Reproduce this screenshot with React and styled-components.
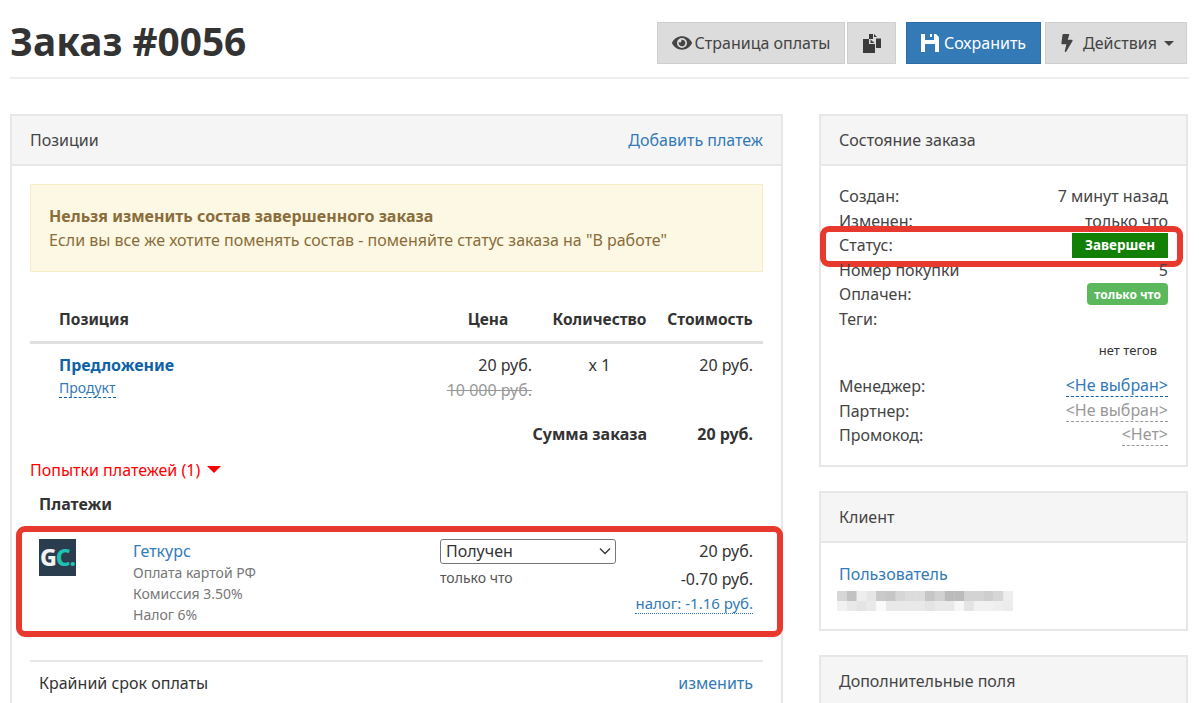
import styled, { createGlobalStyle } from "styled-components";
import { FaEye, FaBolt } from "react-icons/fa";

const GlobalStyle = createGlobalStyle`
  html, body {
    margin: 0;
    padding: 0;
    background: #fff;
  }
  body {
    font-family: "Noto Sans", "Open Sans", sans-serif;
    font-size: 16px;
    color: #333;
  }
  * {
    box-sizing: border-box;
  }
`;

const Page = styled.div`
  width: 1199px;
  height: 703px;
  overflow: hidden;
  padding: 0 10px;
`;

const Header = styled.header`
  height: 79px;
  display: flex;
  justify-content: space-between;
  align-items: flex-start;
  border-bottom: 2px solid #eeeeee;
  margin-bottom: 35px;
`;

const Title = styled.h1`
  margin: 18px 0 0;
  font-size: 38.8px;
  line-height: 46px;
  font-weight: 700;
  color: #333;
`;

const Toolbar = styled.div`
  display: flex;
  margin: 22px 2px 0 0;
`;

const Button = styled.button`
  width: ${(p) => p.$width}px;
  height: 42px;
  padding: 0;
  margin-left: ${(p) => p.$gap || 0}px;
  display: flex;
  align-items: center;
  justify-content: center;
  gap: ${(p) => p.$iconGap || 4}px;
  font: inherit;
  font-size: 16px;
  color: ${(p) => (p.$primary ? "#fff" : "#444")};
  background: ${(p) => (p.$primary ? "#337ab7" : "#dcdcdc")};
  border: 1px solid ${(p) => (p.$primary ? "#2e6da4" : "#cfcfcf")};
  white-space: nowrap;
`;

const Caret = styled.span`
  width: 0;
  height: 0;
  border-left: ${(p) => p.$size || 5}px solid transparent;
  border-right: ${(p) => p.$size || 5}px solid transparent;
  border-top: ${(p) => p.$size || 5}px solid ${(p) => p.$color || "#444"};
`;

const Columns = styled.div`
  display: grid;
  grid-template-columns: 773px 369px;
  column-gap: 36px;
  align-items: start;
`;

const Side = styled.div`
  display: flex;
  flex-direction: column;
  gap: 24px;
`;

const Panel = styled.section`
  border: 2px solid #e7e7e7;
  background: #fff;
`;

const PanelHeading = styled.div`
  height: 50px;
  padding: 0 18px;
  display: flex;
  align-items: center;
  justify-content: space-between;
  background: #f5f5f5;
  border-bottom: 2px solid #e7e7e7;
  color: #444;
`;

const PanelBody = styled.div`
  padding: ${(p) => p.$pad || "18px"};
  position: relative;
`;

const Link = styled.a`
  color: #337ab7;
  text-decoration: none;
`;

const Alert = styled.div`
  height: 88px;
  padding: 19px 18px;
  background: #fcf8e3;
  border: 1px solid #f5ecc8;
  color: #8a6d3b;
  line-height: 24px;
`;

const AlertTitle = styled.div`
  font-weight: 700;
`;

const Table = styled.table`
  width: 733px;
  margin-top: 27px;
  border-collapse: collapse;
  table-layout: fixed;
`;

const Th = styled.th`
  height: 43px;
  padding: 0 10px 2px;
  font-weight: 700;
  font-size: 15.5px;
  color: #333;
  text-align: ${(p) => p.$align || "center"};
  padding-left: ${(p) => p.$left || 10}px;
  border-bottom: 3px solid #e0e0e0;
`;

const Td = styled.td`
  padding: 9px 10px 6px;
  vertical-align: top;
  text-align: ${(p) => p.$align || "right"};
  padding-left: ${(p) => p.$left || 10}px;
  line-height: 24px;
`;

const SumCell = styled(Td)`
  font-weight: 700;
  padding-top: 14px;
  padding-bottom: 0;
`;

const ItemName = styled.a`
  display: block;
  color: #0f62a8;
  font-weight: 700;
`;

const ItemType = styled.a`
  display: block;
  width: fit-content;
  color: #337ab7;
  font-size: 14px;
  line-height: 18px;
  margin-top: 2px;
  border-bottom: 1px dashed #0f62a8;
`;

const OldPrice = styled.div`
  margin-top: 1px;
  color: #999;
  text-decoration: line-through;
`;

const Attempts = styled.div`
  margin-top: 12px;
  display: flex;
  align-items: center;
  gap: 7px;
  color: #f00;
  line-height: 24px;
`;

const SectionTitle = styled.div`
  margin: 10px 0 0 9px;
  font-weight: 700;
  line-height: 24px;
`;

const Payment = styled.div`
  position: relative;
  display: grid;
  grid-template-columns: 94px 307px 176px 1fr;
  margin: 23px 10px 0 9px;
  height: 97px;
`;

const Highlight = styled.div`
  position: absolute;
  top: ${(p) => p.$top}px;
  left: ${(p) => p.$left}px;
  right: ${(p) => p.$right}px;
  bottom: ${(p) => p.$bottom}px;
  border: 6px solid #e8392e;
  border-radius: 9px;
  pointer-events: none;
`;

const Logo = styled.div`
  width: 37px;
  height: 37px;
  background: #2a3d4f;
  display: flex;
  align-items: center;
  justify-content: center;
  font-weight: 800;
  font-size: 23px;
  letter-spacing: -1px;
  color: #f2f2f2;
`;

const LogoAccent = styled.span`
  color: #1fc2b0;
`;

const Gateway = styled.div`
  line-height: 21px;
  font-size: 14px;
  color: #777;
`;

const GatewayName = styled(Link)`
  display: block;
  font-size: 16px;
  line-height: 24px;
  margin-bottom: -1px;
`;

const StatusSelect = styled.select`
  appearance: none;
  width: 176px;
  height: 25px;
  padding: 0 0 0 5px;
  font: inherit;
  color: #333;
  background: #fff url("data:image/svg+xml,%3Csvg xmlns='http://www.w3.org/2000/svg' width='12' height='8'%3E%3Cpath d='M1 1.5 6 6.5 11 1.5' fill='none' stroke='%23333' stroke-width='1.3'/%3E%3C/svg%3E") no-repeat right 4px center;
  border: 1px solid #767676;
  border-radius: 3px;
`;

const PaymentTime = styled.div`
  font-size: 14px;
  color: #555;
  margin-top: 4px;
`;

const Amounts = styled.div`
  display: flex;
  flex-direction: column;
  align-items: flex-end;
  line-height: 24px;
`;

const Amount = styled.div`
  margin-top: ${(p) => p.$gap || 0}px;
`;

const TaxLink = styled(Link)`
  border-bottom: 1px dotted #337ab7;
  font-size: 15px;
  line-height: 19px;
  margin-top: 3px;
`;

const Deadline = styled.div`
  margin-top: 24px;
  padding: 9px 10px 0 9px;
  height: 60px;
  display: flex;
  justify-content: space-between;
  border-top: 2px solid #e7e7e7;
  line-height: 24px;
`;

const InfoRow = styled.div`
  position: relative;
  display: flex;
  justify-content: space-between;
  align-items: center;
  height: 24.5px;
  color: #444;
`;

const StatusBadge = styled.span`
  width: 96px;
  height: 25px;
  background: #128005;
  color: #fff;
  font-weight: 700;
  font-size: 13.5px;
  display: flex;
  align-items: center;
  justify-content: center;
`;

const PaidBadge = styled.span`
  height: 22px;
  padding: 0 7px;
  border-radius: 4px;
  background: #5cb85c;
  color: #fff;
  font-weight: 700;
  font-size: 12px;
  display: flex;
  align-items: center;
`;

const NoTags = styled.div`
  height: 43px;
  padding: 7px 11px 0 0;
  text-align: right;
  font-size: 13px;
  color: #333;
  line-height: 24px;
`;

const Picker = styled.a`
  color: ${(p) => (p.$muted ? "#999" : "#337ab7")};
  border-bottom: 1px dashed ${(p) => (p.$muted ? "#999" : "#0f62a8")};
  line-height: 21px;
`;

const Blur = styled.svg`
  display: block;
  margin: 6px 0 0 -2px;
`;

const mosaic = [
  [0.3, 0.45, 0.12, 0.18, 0.4, 0.42, 0.3, 0.26, 0.26, 0.42, 0.34, 0.5, 0.5, 0.32, 0.32, 0.36, 0.3, 0.12],
  [0.1, 0.16, 0.2, 0.16, 0.04, 0.16, 0.16, 0.16, 0.16, 0.2, 0.16, 0.16, 0.06, 0.2, 0.1, 0.1, 0.12, 0.14],
];

const CopyIcon = () => (
  <svg width="18" height="19" viewBox="0 0 18 19" fill="#3a3a3a">
    <path d="M0 5h6v5h6v9H0z" />
    <path d="M7.5 5.5 11.5 9H7.5z" />
    <path d="M6 0h4v5H6z" />
    <path d="M11 0l3 3h-3z" />
    <path d="M13 4.5h5V14h-5z" />
  </svg>
);

const SaveIcon = () => (
  <svg width="18" height="18" viewBox="0 0 18 18" fill="#fff">
    <path
      fillRule="evenodd"
      d="M0 0h15l3 3v15H0zM4 0v6h9V0h-2v3H9V0zM4 10v8h10v-8z"
    />
  </svg>
);

function App() {
  return (
    <Page>
      <GlobalStyle />
      <Header>
        <Title>Заказ #0056</Title>
        <Toolbar>
          <Button $width={188} $iconGap={3}>
            <FaEye size={20} />
            Страница оплаты
          </Button>
          <Button $width={49} $gap={2}>
            <CopyIcon />
          </Button>
          <Button $primary $width={135} $gap={10} $iconGap={5}>
            <SaveIcon />
            Сохранить
          </Button>
          <Button $width={142} $gap={4} $iconGap={7}>
            <FaBolt size={18} />
            Действия
            <Caret />
          </Button>
        </Toolbar>
      </Header>

      <Columns>
        <Panel>
          <PanelHeading>
            Позиции
            <Link>Добавить платеж</Link>
          </PanelHeading>
          <PanelBody>
            <Alert>
              <AlertTitle>Нельзя изменить состав завершенного заказа</AlertTitle>
              Если вы все же хотите поменять состав - поменяйте статус заказа на "В работе"
            </Alert>
            <Table>
              <colgroup>
                <col style={{ width: 404 }} />
                <col style={{ width: 108 }} />
                <col style={{ width: 115 }} />
                <col style={{ width: 106 }} />
              </colgroup>
              <thead>
                <tr>
                  <Th $align="left" $left={29}>Позиция</Th>
                  <Th>Цена</Th>
                  <Th>Количество</Th>
                  <Th>Стоимость</Th>
                </tr>
              </thead>
              <tbody>
                <tr>
                  <Td $align="left" $left={29}>
                    <ItemName>Предложение</ItemName>
                    <ItemType>Продукт</ItemType>
                  </Td>
                  <Td>
                    20 руб.
                    <OldPrice>10 000 руб.</OldPrice>
                  </Td>
                  <Td $align="center">x 1</Td>
                  <Td>20 руб.</Td>
                </tr>
                <tr>
                  <SumCell colSpan={3}>Сумма заказа</SumCell>
                  <SumCell>20 руб.</SumCell>
                </tr>
              </tbody>
            </Table>
            <Attempts>
              Попытки платежей (1)
              <Caret $color="#f00" $size={7} />
            </Attempts>
            <SectionTitle>Платежи</SectionTitle>
            <Payment>
              <Logo>
                G<LogoAccent>C.</LogoAccent>
              </Logo>
              <Gateway>
                <GatewayName>Геткурс</GatewayName>
                Оплата картой РФ
                <br />
                Комиссия 3.50%
                <br />
                Налог 6%
              </Gateway>
              <div>
                <StatusSelect defaultValue="Получен">
                  <option>Получен</option>
                </StatusSelect>
                <PaymentTime>только что</PaymentTime>
              </div>
              <Amounts>
                <Amount>20 руб.</Amount>
                <Amount $gap={4}>-0.70 руб.</Amount>
                <TaxLink>налог: -1.16 руб.</TaxLink>
              </Amounts>
              <Highlight $top={-13} $left={-23} $right={-30} $bottom={-1} />
            </Payment>
            <Deadline>
              Крайний срок оплаты
              <Link>изменить</Link>
            </Deadline>
          </PanelBody>
        </Panel>

        <Side>
          <Panel>
            <PanelHeading>Состояние заказа</PanelHeading>
            <PanelBody $pad="18px 18px 17px">
              <InfoRow>
                <span>Создан:</span>
                <span>7 минут назад</span>
              </InfoRow>
              <InfoRow>
                <span>Изменен:</span>
                <span>только что</span>
              </InfoRow>
              <InfoRow>
                <span>Статус:</span>
                <StatusBadge>Завершен</StatusBadge>
                <Highlight $top={-7} $left={-19} $right={-15} $bottom={-9} />
              </InfoRow>
              <InfoRow>
                <span>Номер покупки</span>
                <span>5</span>
              </InfoRow>
              <InfoRow>
                <span>Оплачен:</span>
                <PaidBadge>только что</PaidBadge>
              </InfoRow>
              <InfoRow>
                <span>Теги:</span>
              </InfoRow>
              <NoTags>нет тегов</NoTags>
              <InfoRow>
                <span>Менеджер:</span>
                <Picker>&lt;Не выбран&gt;</Picker>
              </InfoRow>
              <InfoRow>
                <span>Партнер:</span>
                <Picker $muted>&lt;Не выбран&gt;</Picker>
              </InfoRow>
              <InfoRow>
                <span>Промокод:</span>
                <Picker $muted>&lt;Нет&gt;</Picker>
              </InfoRow>
            </PanelBody>
          </Panel>

          <Panel>
            <PanelHeading>Клиент</PanelHeading>
            <PanelBody $pad="20px 18px 18px">
              <Link>Пользователь</Link>
              <Blur width="176" height="20" viewBox="0 0 18 2" preserveAspectRatio="none">
                {mosaic.map((row, y) =>
                  row.map((o, x) => (
                    <rect key={`${x}-${y}`} x={x} y={y} width="1" height="1" fill="#777" opacity={o} />
                  ))
                )}
              </Blur>
            </PanelBody>
          </Panel>

          <Panel>
            <PanelHeading>Дополнительные поля</PanelHeading>
          </Panel>
        </Side>
      </Columns>
    </Page>
  );
}

export default App;
